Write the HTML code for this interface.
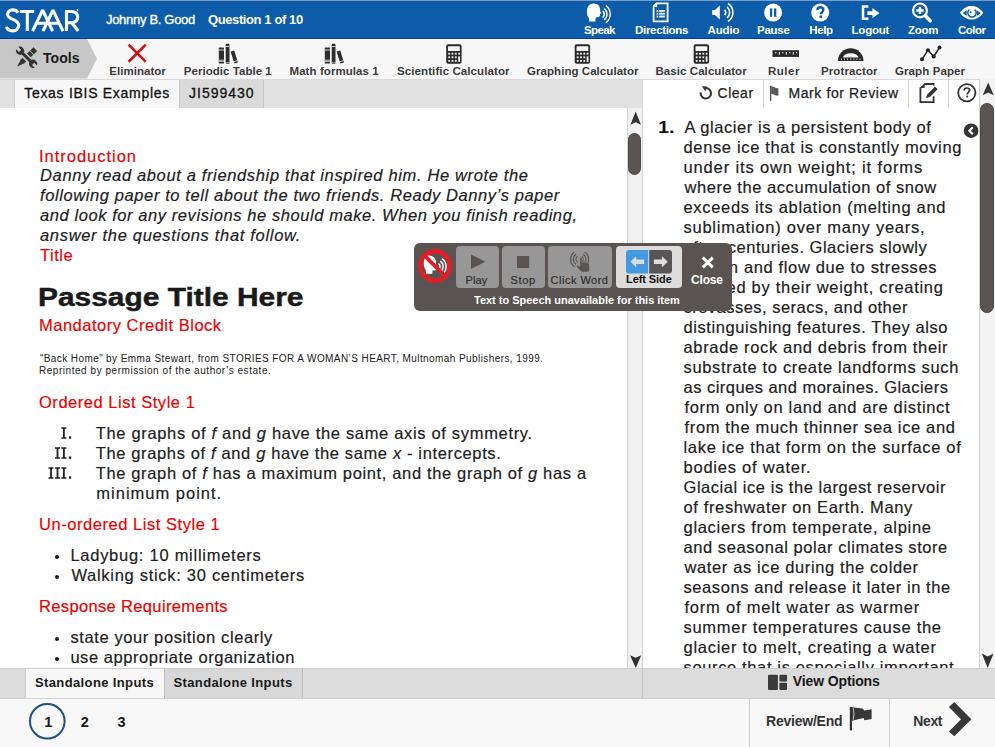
<!DOCTYPE html>
<html><head><meta charset="utf-8">
<style>
*{box-sizing:border-box;margin:0;padding:0}
html,body{width:995px;height:747px;overflow:hidden;background:#fff;font-family:"Liberation Sans",sans-serif}
.a{position:absolute}
.t{position:absolute;white-space:nowrap}
.layer{position:absolute;left:0;top:0;width:995px;height:747px}
</style></head><body>
<!-- header -->
<div class="a" style="left:0;top:0;width:995px;height:39px;background:#0c5caa"></div>
<div class="a" style="left:0;top:0;width:995px;height:1px;background:#7d9dc4"></div>
<div class="a" style="left:0;top:38px;width:995px;height:1px;background:#033e9a"></div>
<svg class="a" style="left:0;top:0" width="90" height="39" viewBox="0 0 90 39">
  <g fill="none" stroke="#fff" stroke-width="3.1">
    <path d="M18.2 12.6 C16.8 10.6 14.8 9.9 12.7 9.9 C9.6 9.9 7.6 11.9 7.6 14.4 C7.6 20.2 18.7 18.6 18.7 25.3 C18.7 28.7 16.1 30.9 12.7 30.9 C9.7 30.9 7.3 29.1 6.3 26.9"/>
    <path d="M19.8 11.5 H34.2 M27.3 11.5 V31"/>
    <path d="M32.6 31.2 L42.6 10.2 L52.6 31.2 M36.6 23.2 H48.4" stroke-linejoin="bevel"/>
    <path d="M43 31.2 L53 10.2 L63 31.2 M47 23.2 H58.9" stroke-linejoin="bevel"/>
    <path d="M66.5 31 V11.5 H71.2 C75.6 11.5 77.7 13.7 77.7 17.1 C77.7 20.7 75.3 22.7 71.2 22.7 H67.2 M71.6 22.5 L78.3 31"/>
  </g>
  <circle cx="77.6" cy="9.9" r="0.9" fill="#fff"/>
</svg>
<!-- header icons -->
<svg class="a" style="left:575px;top:0" width="420" height="26" viewBox="575 0 420 26">
  <g fill="#fff">
    <!-- speak head -->
    <path d="M593.5 3.6 C597.8 3.6 600.2 6.5 600.2 9.8 L600.1 11.2 L601.2 13.3 L600 13.9 L599.9 15.6 C599.8 16.8 598.8 17.2 597.4 17.2 L595.6 17.6 L595.4 21.6 L589.2 21.6 L589.2 18.4 C587.6 16.6 586.9 14.5 586.9 11.4 C586.9 6.6 589.6 3.6 593.5 3.6 Z"/>
  </g>
  <g fill="none" stroke="#fff" stroke-linecap="butt">
    <path d="M602.63 10.83 A4.40 4.40 0 0 1 602.63 17.57" stroke-width="1.70"/>
    <path d="M604.23 8.53 A7.20 7.20 0 0 1 604.23 19.87" stroke-width="1.40"/>
    <path d="M605.77 5.68 A10.40 10.40 0 0 1 605.77 22.72" stroke-width="1.40"/>
  </g>
  <!-- directions doc -->
  <path d="M656.5 3.3 H667.6 V21.3 H653.6 V6.3 Z" fill="none" stroke="#fff" stroke-width="1.8" stroke-linejoin="miter"/>
  <path d="M656.5 3.3 V6.3 H653.6" fill="none" stroke="#fff" stroke-width="1.4"/>
  <g fill="#fff">
    <rect x="656.6" y="10" width="1.7" height="1.8"/><rect x="659.2" y="10" width="5.6" height="1.8"/>
    <rect x="656.6" y="12.8" width="1.7" height="1.8"/><rect x="659.2" y="12.8" width="5.6" height="1.8"/>
    <rect x="656.6" y="15.6" width="1.7" height="1.8"/><rect x="659.2" y="15.6" width="5.6" height="1.8"/>
  </g>
  <!-- audio -->
  <path d="M712.2 10 H715 L719.8 5.6 V19.4 L715 15 H712.2 Z" fill="#fff"/>
  <g fill="none" stroke="#fff">
    <path d="M724.58 9.97 A3.40 3.40 0 0 1 724.58 15.03" stroke-width="1.70"/>
    <path d="M726.99 6.91 A7.30 7.30 0 0 1 726.99 18.09" stroke-width="1.50"/>
    <path d="M727.92 3.51 A10.60 10.60 0 0 1 727.92 21.49" stroke-width="1.50"/>
  </g>
  <!-- pause -->
  <circle cx="773.1" cy="12.6" r="9" fill="#fff"/>
  <rect x="769.9" y="8.4" width="2.3" height="8.4" fill="#0c5caa"/><rect x="774" y="8.4" width="2.3" height="8.4" fill="#0c5caa"/>
  <!-- help -->
  <circle cx="820.2" cy="12.6" r="9" fill="#fff"/>
  <path d="M817.4 10.1 C817.4 8.2 818.7 7.2 820.4 7.2 C822.2 7.2 823.3 8.3 823.3 9.9 C823.3 12 820.8 12.2 820.8 14.3" fill="none" stroke="#0c5caa" stroke-width="2.4"/>
  <rect x="819.5" y="15.5" width="2.6" height="2.4" fill="#0c5caa"/>
  <!-- logout -->
  <path d="M868.4 6.4 H863 V18.8 H868.4" fill="none" stroke="#fff" stroke-width="2.5"/>
  <path d="M867.4 11.2 H872.4 V7.9 L879.4 13.1 L872.4 18.3 V15 H867.4 Z" fill="#fff"/>
  <!-- zoom -->
  <circle cx="920" cy="10.4" r="6.9" fill="none" stroke="#fff" stroke-width="2.2"/>
  <path d="M925.3 15.7 L930.2 20.8" stroke="#fff" stroke-width="3.4" stroke-linecap="round"/>
  <path d="M916.3 10.4 H923.7 M920 6.7 V14.1" stroke="#fff" stroke-width="2.5"/>
  <!-- color eye -->
  <path d="M960 12.8 C963.5 7.8 967.6 6 971.6 6 C975.6 6 979.7 7.8 983.2 12.8 C979.7 17.8 975.6 19.6 971.6 19.6 C967.6 19.6 963.5 17.8 960 12.8 Z" fill="#fff"/>
  <path d="M962.6 13.1 L966.6 10.2 V16 Z" fill="#0c5caa"/>
  <path d="M980.8 13.1 L976.8 10.2 V16 Z" fill="#0c5caa"/>
  <path d="M974.7 9.6 A4.2 4.2 0 1 1 969.3 9.6" fill="none" stroke="#0c5caa" stroke-width="1.5"/>
  <circle cx="970.7" cy="12.3" r="0.95" fill="#0c5caa"/>
</svg>

<!-- toolbar -->
<div class="a" style="left:0;top:39px;width:995px;height:40px;background:#f7f7f7"></div>
<svg class="a" style="left:0;top:39px" width="100" height="40"><path d="M0 0 H87 L97 19.8 L87 39.6 H0 Z" fill="#c7c7c7"/></svg>
<svg class="a" style="left:0;top:0" width="995" height="80" viewBox="0 0 995 80">
  <!-- tools icon -->
  <g transform="translate(17.2 66.6) rotate(-44)" fill="#333">
    <path d="M0 0 L7.5 -2.6 H10 V2.6 H7.5 Z"/>
    <rect x="15.2" y="-2.6" width="4.6" height="5.2"/>
    <rect x="20.6" y="-2.6" width="4.6" height="5.2"/>
  </g>
  <g transform="translate(26.6 57.3) rotate(45)">
    <path d="M-7.5 0 H7.5" stroke="#c7c7c7" stroke-width="6"/>
    <path d="M-7.5 0 H7.5" stroke="#333" stroke-width="3"/>
    <circle cx="-9.2" cy="0" r="4" fill="#333"/>
    <circle cx="9.2" cy="0" r="4" fill="#333"/>
    <rect x="-14.2" y="-1.6" width="5" height="3.2" fill="#c7c7c7"/>
    <rect x="9.2" y="-1.6" width="5" height="3.2" fill="#c7c7c7"/>
  </g>
  <!-- eliminator X -->
  <path d="M129.5 45.5 L144.8 60.8 M144.8 45.5 L129.5 60.8" stroke="#cf111a" stroke-width="2.6" stroke-linecap="square"/>
  <!-- books x2 -->
  <g fill="#2e2e2e">
    <rect x="218.8" y="47.6" width="5.2" height="16" rx="0.6"/>
    <rect x="225.7" y="43.8" width="3.8" height="19.9" rx="1"/>
    <path d="M230.6 51.4 L234.2 50.4 L238 62.4 L234.4 63.4 Z"/>
  </g>
  <g fill="#f7f7f7">
    <rect x="218.8" y="49.6" width="5.2" height="0.8"/><rect x="218.8" y="59.8" width="5.2" height="0.8"/><rect x="218.8" y="61.4" width="5.2" height="0.6"/>
    <rect x="225.7" y="46.2" width="3.8" height="0.8"/><rect x="225.7" y="62.3" width="3.8" height="0.5"/>
    <path d="M233.6 61.2 L237.4 60.2 L237.6 60.9 L233.8 61.9 Z"/>
  </g>
  <g fill="#2e2e2e" transform="translate(106 0)">
    <rect x="218.8" y="47.6" width="5.2" height="16" rx="0.6"/>
    <rect x="225.7" y="43.8" width="3.8" height="19.9" rx="1"/>
    <path d="M230.6 51.4 L234.2 50.4 L238 62.4 L234.4 63.4 Z"/>
  </g>
  <g fill="#f7f7f7" transform="translate(106 0)">
    <rect x="218.8" y="49.6" width="5.2" height="0.8"/><rect x="218.8" y="59.8" width="5.2" height="0.8"/><rect x="218.8" y="61.4" width="5.2" height="0.6"/>
    <rect x="225.7" y="46.2" width="3.8" height="0.8"/><rect x="225.7" y="62.3" width="3.8" height="0.5"/>
    <path d="M233.6 61.2 L237.4 60.2 L237.6 60.9 L233.8 61.9 Z"/>
  </g>
  <!-- calculators -->
  <g>
    <rect x="446.2" y="44.3" width="15.4" height="19.5" rx="2" fill="#2a2a2a"/>
    <rect x="448" y="46.3" width="11.8" height="4.6" rx="0.5" fill="#f7f7f7"/>
    <g fill="#f7f7f7">
      <rect x="448.3" y="52.8" width="1.8" height="1.8"/><rect x="451.6" y="52.8" width="1.8" height="1.8"/><rect x="454.9" y="52.8" width="1.8" height="1.8"/><rect x="458.2" y="52.8" width="1.8" height="1.8"/>
      <rect x="448.3" y="56.4" width="1.8" height="1.8"/><rect x="451.6" y="56.4" width="1.8" height="1.8"/><rect x="454.9" y="56.4" width="1.8" height="1.8"/>
      <rect x="448.3" y="60" width="1.8" height="1.8"/><rect x="451.6" y="60" width="1.8" height="1.8"/><rect x="454.9" y="60" width="1.8" height="1.8"/>
      <rect x="458.2" y="56.4" width="1.8" height="5.4"/>
    </g>
  </g>
  <g transform="translate(128.5 0)">
    <rect x="446.2" y="44.3" width="15.4" height="19.5" rx="2" fill="#2a2a2a"/>
    <rect x="448" y="46.3" width="11.8" height="4.6" rx="0.5" fill="#f7f7f7"/>
    <g fill="#f7f7f7">
      <rect x="448.3" y="52.8" width="1.8" height="1.8"/><rect x="451.6" y="52.8" width="1.8" height="1.8"/><rect x="454.9" y="52.8" width="1.8" height="1.8"/><rect x="458.2" y="52.8" width="1.8" height="1.8"/>
      <rect x="448.3" y="56.4" width="1.8" height="1.8"/><rect x="451.6" y="56.4" width="1.8" height="1.8"/><rect x="454.9" y="56.4" width="1.8" height="1.8"/>
      <rect x="448.3" y="60" width="1.8" height="1.8"/><rect x="451.6" y="60" width="1.8" height="1.8"/><rect x="454.9" y="60" width="1.8" height="1.8"/>
      <rect x="458.2" y="56.4" width="1.8" height="5.4"/>
    </g>
  </g>
  <g transform="translate(247.5 0)">
    <rect x="446.2" y="44.3" width="15.4" height="19.5" rx="2" fill="#2a2a2a"/>
    <rect x="448" y="46.3" width="11.8" height="4.6" rx="0.5" fill="#f7f7f7"/>
    <g fill="#f7f7f7">
      <rect x="448.3" y="52.8" width="1.8" height="1.8"/><rect x="451.6" y="52.8" width="1.8" height="1.8"/><rect x="454.9" y="52.8" width="1.8" height="1.8"/><rect x="458.2" y="52.8" width="1.8" height="1.8"/>
      <rect x="448.3" y="56.4" width="1.8" height="1.8"/><rect x="451.6" y="56.4" width="1.8" height="1.8"/><rect x="454.9" y="56.4" width="1.8" height="1.8"/>
      <rect x="448.3" y="60" width="1.8" height="1.8"/><rect x="451.6" y="60" width="1.8" height="1.8"/><rect x="454.9" y="60" width="1.8" height="1.8"/>
      <rect x="458.2" y="56.4" width="1.8" height="5.4"/>
    </g>
  </g>
  <!-- ruler -->
  <rect x="772.5" y="50.2" width="26.5" height="6.7" fill="#2a2a2a"/>
  <g fill="#f7f7f7">
    <rect x="775.3" y="52" width="1" height="1.3"/><rect x="778.8" y="52" width="1" height="2.6"/><rect x="782.3" y="52" width="1" height="1.3"/><rect x="785.8" y="52" width="1" height="2.6"/><rect x="789.3" y="52" width="1" height="1.3"/><rect x="792.8" y="52" width="1" height="2.6"/><rect x="796.2" y="52" width="1" height="1.3"/>
  </g>
  <!-- protractor -->
  <path d="M837.9 61 A12.8 12.8 0 0 1 863.5 61 Z" fill="#2a2a2a"/>
  <path d="M843 57.6 A7.7 4.4 0 0 1 858.4 57.6 Z" fill="#f7f7f7"/>
  <g fill="#f7f7f7">
    <rect x="841" y="58.6" width="0.9" height="1.2"/><rect x="844" y="58.6" width="0.9" height="1.2"/><rect x="847" y="58.6" width="0.9" height="1.2"/><rect x="850.3" y="58.6" width="0.9" height="1.2"/><rect x="853.5" y="58.6" width="0.9" height="1.2"/><rect x="856.5" y="58.6" width="0.9" height="1.2"/><rect x="859.5" y="58.6" width="0.9" height="1.2"/>
  </g>
  <!-- graph paper -->
  <path d="M922 59.3 L927.9 50.2 L933.7 56.5 L939.5 47.6" fill="none" stroke="#222" stroke-width="1.5"/>
  <g fill="#222"><circle cx="922" cy="59.3" r="2"/><circle cx="927.9" cy="50.2" r="2"/><circle cx="933.7" cy="56.5" r="2"/><circle cx="939.5" cy="47.6" r="2"/></g>
</svg>

<!-- tab row -->
<div class="a" style="left:0;top:79px;width:643px;height:29px;background:#e1e1e1"></div>
<div class="a" style="left:14px;top:79px;width:165px;height:29px;background:#f7f7f7;border-left:1px solid #cfcfcf"></div>
<div class="a" style="left:179px;top:79px;width:85px;height:29px;background:#dadada;border-left:1px solid #c8c8c8;border-right:1px solid #c8c8c8"></div>
<!-- right top bar -->
<div class="a" style="left:642px;top:79px;width:353px;height:29px;background:#fff;border-left:1px solid #d6d6d6"></div>
<div class="a" style="left:0;top:79px;width:995px;height:1px;background:#d9d9d9"></div>
<div class="a" style="left:763px;top:79px;width:1px;height:29px;background:#d4d4d4"></div>
<div class="a" style="left:908px;top:79px;width:1px;height:29px;background:#d4d4d4"></div>
<div class="a" style="left:948px;top:79px;width:1px;height:29px;background:#d4d4d4"></div>
<svg class="a" style="left:640px;top:79px" width="355" height="29" viewBox="640 79 355 29">
  <!-- clear icon -->
  <path d="M705.8 88.1 A5.2 5.2 0 1 1 700.7 92.4" fill="none" stroke="#333" stroke-width="2"/>
  <path d="M701.8 86.2 L707.2 86.6 L705.4 91.4 Z" fill="#333"/>
  <!-- flag -->
  <path d="M770.6 85.8 V100.9" stroke="#555" stroke-width="1.4"/>
  <path d="M771.2 86.2 C773.4 85.8 775.2 88.6 778.4 88.2 V95.8 C775.4 96 773.6 93.6 771.2 94 Z" fill="#5a5a5a"/>
  <!-- edit icon -->
  <path d="M924.2 84 H933.6 V85.6 M933.6 96.2 V102.2 H920.4 V87.4" fill="none" stroke="#333" stroke-width="1.8"/>
  <path d="M924.6 83.2 V88 H919.6 Z" fill="#333"/>
  <path d="M926 98 L927.2 94.4 L935 86.6 L937.6 89.2 L929.8 97 Z" fill="#333"/>
  <!-- help -->
  <circle cx="966.8" cy="92.8" r="8.6" fill="none" stroke="#333" stroke-width="1.8"/>
  <path d="M964.2 90.6 C964.2 88.8 965.4 88 966.9 88 C968.5 88 969.6 89 969.6 90.3 C969.6 92.2 967.2 92.4 967.2 94.4" fill="none" stroke="#333" stroke-width="1.7"/>
  <rect x="966.3" y="95.6" width="1.8" height="1.8" fill="#333"/>
</svg>

<!-- left content -->
<div class="a" style="left:0;top:108px;width:628px;height:560px;background:#fff"></div>
<div class="layer" style="clip-path:inset(108px 368px 79px 0)">
<div class="t" id="l1" style="left:39.00px;top:146.61px;font-size:16.50px;line-height:18.959px;color:#ec0000;font-family:'Liberation Sans',sans-serif;letter-spacing:0.982px;-webkit-text-stroke:0.18px currentColor;">Introduction</div>
<div class="t" id="l2" style="left:40.00px;top:166.31px;font-size:16.50px;line-height:18.959px;color:#202020;font-family:'Liberation Sans',sans-serif;font-style:italic;letter-spacing:0.643px;-webkit-text-stroke:0.18px currentColor;">Danny read about a friendship that inspired him. He wrote the</div>
<div class="t" id="l3" style="left:40.00px;top:186.31px;font-size:16.50px;line-height:18.959px;color:#202020;font-family:'Liberation Sans',sans-serif;font-style:italic;letter-spacing:0.600px;-webkit-text-stroke:0.18px currentColor;">following paper to tell about the two friends. Ready Danny&#8217;s paper</div>
<div class="t" id="l4" style="left:40.00px;top:206.31px;font-size:16.50px;line-height:18.959px;color:#202020;font-family:'Liberation Sans',sans-serif;font-style:italic;letter-spacing:0.576px;-webkit-text-stroke:0.18px currentColor;">and look for any revisions he should make. When you finish reading,</div>
<div class="t" id="l5" style="left:40.00px;top:226.31px;font-size:16.50px;line-height:18.959px;color:#202020;font-family:'Liberation Sans',sans-serif;font-style:italic;letter-spacing:0.681px;-webkit-text-stroke:0.18px currentColor;">answer the questions that follow.</div>
<div class="t" id="l6" style="left:40.00px;top:246.41px;font-size:16.50px;line-height:18.959px;color:#ec0000;font-family:'Liberation Sans',sans-serif;letter-spacing:0.500px;-webkit-text-stroke:0.18px currentColor;">Title</div>
<div class="t" id="l7" style="left:37.50px;top:282.61px;font-size:25.00px;line-height:28.725px;color:#1a1a1a;font-family:'Liberation Sans',sans-serif;font-weight:bold;transform:scaleX(1.1964);transform-origin:0 0;-webkit-text-stroke:0.45px #1a1a1a;">Passage Title Here</div>
<div class="t" id="l8" style="left:39.00px;top:315.50px;font-size:16.50px;line-height:18.959px;color:#ec0000;font-family:'Liberation Sans',sans-serif;letter-spacing:0.505px;-webkit-text-stroke:0.18px currentColor;">Mandatory Credit Block</div>
<div class="t" id="l9" style="left:40.00px;top:352.60px;font-size:10.00px;line-height:11.490px;color:#202020;font-family:'Liberation Sans',sans-serif;letter-spacing:0.416px;">&#8220;Back Home&#8221; by Emma Stewart, from STORIES FOR A WOMAN&#8217;S HEART, Multnomah Publishers, 1999.</div>
<div class="t" id="l10" style="left:39.00px;top:365.41px;font-size:10.00px;line-height:11.490px;color:#202020;font-family:'Liberation Sans',sans-serif;letter-spacing:0.539px;">Reprinted by permission of the author&#8217;s estate.</div>
<div class="t" id="l11" style="left:39.00px;top:392.50px;font-size:16.50px;line-height:18.959px;color:#ec0000;font-family:'Liberation Sans',sans-serif;letter-spacing:0.526px;-webkit-text-stroke:0.18px currentColor;">Ordered List Style 1</div>
<div class="t" id="o1" style="left:95.70px;top:423.72px;font-size:16.50px;line-height:18.959px;color:#202020;font-family:'Liberation Sans',sans-serif;letter-spacing:0.673px;-webkit-text-stroke:0.18px currentColor;">The graphs of <i>f</i> and <i>g</i> have the same axis of symmetry.</div>
<div class="t" id="o2" style="left:95.70px;top:443.81px;font-size:16.50px;line-height:18.959px;color:#202020;font-family:'Liberation Sans',sans-serif;letter-spacing:0.636px;-webkit-text-stroke:0.18px currentColor;">The graphs of <i>f</i> and <i>g</i> have the same <i>x</i> - intercepts.</div>
<div class="t" id="o3" style="left:95.70px;top:463.72px;font-size:16.50px;line-height:18.959px;color:#202020;font-family:'Liberation Sans',sans-serif;letter-spacing:0.647px;-webkit-text-stroke:0.18px currentColor;">The graph of <i>f</i> has a maximum point, and the graph of <i>g</i> has a</div>
<div class="t" id="o4" style="left:96.30px;top:484.31px;font-size:16.50px;line-height:18.959px;color:#202020;font-family:'Liberation Sans',sans-serif;letter-spacing:1.000px;-webkit-text-stroke:0.18px currentColor;">minimum point.</div>
<div class="t" id="l12" style="left:39.00px;top:514.70px;font-size:16.50px;line-height:18.959px;color:#ec0000;font-family:'Liberation Sans',sans-serif;letter-spacing:0.545px;-webkit-text-stroke:0.18px currentColor;">Un-ordered List Style 1</div>
<div class="t" id="u1" style="left:70.40px;top:546.00px;font-size:16.50px;line-height:18.959px;color:#202020;font-family:'Liberation Sans',sans-serif;letter-spacing:0.736px;-webkit-text-stroke:0.18px currentColor;">Ladybug: 10 millimeters</div>
<div class="t" id="u2" style="left:71.40px;top:565.70px;font-size:16.50px;line-height:18.959px;color:#202020;font-family:'Liberation Sans',sans-serif;letter-spacing:0.707px;-webkit-text-stroke:0.18px currentColor;">Walking stick: 30 centimeters</div>
<div class="t" id="l13" style="left:39.00px;top:597.00px;font-size:16.50px;line-height:18.959px;color:#ec0000;font-family:'Liberation Sans',sans-serif;letter-spacing:0.350px;-webkit-text-stroke:0.18px currentColor;">Response Requirements</div>
<div class="t" id="u3" style="left:70.40px;top:628.31px;font-size:16.50px;line-height:18.959px;color:#202020;font-family:'Liberation Sans',sans-serif;letter-spacing:0.608px;-webkit-text-stroke:0.18px currentColor;">state your position clearly</div>
<div class="t" id="u4" style="left:70.40px;top:648.00px;font-size:16.50px;line-height:18.959px;color:#202020;font-family:'Liberation Sans',sans-serif;letter-spacing:0.548px;-webkit-text-stroke:0.18px currentColor;">use appropriate organization</div>
<svg class="a" style="left:0;top:0" width="100" height="500" viewBox="0 0 100 500"><g fill="#202020"><path d="M61.40 427.20 H66.40 V428.75 H64.80 V437.15 H66.40 V438.70 H61.40 V437.15 H63.00 V428.75 H61.40 Z"/><rect x="68.9" y="436.40" width="2.3" height="2.3"/><path d="M55.00 447.30 H60.00 V448.85 H58.40 V457.25 H60.00 V458.80 H55.00 V457.25 H56.60 V448.85 H55.00 Z"/><path d="M61.40 447.30 H66.40 V448.85 H64.80 V457.25 H66.40 V458.80 H61.40 V457.25 H63.00 V448.85 H61.40 Z"/><rect x="68.9" y="456.50" width="2.3" height="2.3"/><path d="M48.50 467.20 H53.50 V468.75 H51.90 V477.15 H53.50 V478.70 H48.50 V477.15 H50.10 V468.75 H48.50 Z"/><path d="M55.00 467.20 H60.00 V468.75 H58.40 V477.15 H60.00 V478.70 H55.00 V477.15 H56.60 V468.75 H55.00 Z"/><path d="M61.40 467.20 H66.40 V468.75 H64.80 V477.15 H66.40 V478.70 H61.40 V477.15 H63.00 V468.75 H61.40 Z"/><rect x="68.9" y="476.40" width="2.3" height="2.3"/></g></svg>
<div class="a" style="left:55px;top:554.8px;width:4.1px;height:4.1px;border-radius:50%;background:#1a1a1a"></div>
<div class="a" style="left:55px;top:574.8px;width:4.1px;height:4.1px;border-radius:50%;background:#1a1a1a"></div>
<div class="a" style="left:55px;top:637.1px;width:4.1px;height:4.1px;border-radius:50%;background:#1a1a1a"></div>
<div class="a" style="left:55px;top:656.9px;width:4.1px;height:4.1px;border-radius:50%;background:#1a1a1a"></div>
</div>
<!-- left scrollbar -->
<div class="a" style="left:627px;top:108px;width:16px;height:560px;background:#f1f1f1;border-left:1px solid #d3d3d3;border-right:1px solid #d3d3d3"></div>
<div class="a" style="left:628px;top:132.5px;width:13px;height:42.2px;border-radius:6.5px;background:#5a5552;border:1px solid #4d4945"></div>
<svg class="a" style="left:627px;top:108px" width="16" height="560" viewBox="627 108 16 560">
  <path d="M635.7 111.4 L641 124.8 L635.7 122.3 L630.4 124.8 Z" fill="#333"/>
  <path d="M635.7 668 L641.3 655.2 L635.7 657.7 L630.1 655.2 Z" fill="#333"/>
</svg>

<!-- right content -->
<div class="a" style="left:643px;top:108px;width:337px;height:560px;background:#fff"></div>
<div class="layer" style="clip-path:inset(108px 15px 79px 643px)">
<div class="t" id="n1" style="left:657.60px;top:118.72px;font-size:16.00px;line-height:18.384px;color:#111;font-family:'Liberation Sans',sans-serif;font-weight:bold;transform:scaleX(1.2350);transform-origin:0 0;">1.</div>
<div class="t" id="rl0" style="left:684.50px;top:117.72px;font-size:16.50px;line-height:18.959px;color:#202020;font-family:'Liberation Sans',sans-serif;letter-spacing:0.562px;-webkit-text-stroke:0.18px currentColor;">A glacier is a persistent body of</div>
<div class="t" id="rl1" style="left:683.50px;top:137.72px;font-size:16.50px;line-height:18.959px;color:#202020;font-family:'Liberation Sans',sans-serif;letter-spacing:0.647px;-webkit-text-stroke:0.18px currentColor;">dense ice that is constantly moving</div>
<div class="t" id="rl2" style="left:683.50px;top:157.72px;font-size:16.50px;line-height:18.959px;color:#202020;font-family:'Liberation Sans',sans-serif;letter-spacing:0.862px;-webkit-text-stroke:0.18px currentColor;">under its own weight; it forms</div>
<div class="t" id="rl3" style="left:684.50px;top:177.72px;font-size:16.50px;line-height:18.959px;color:#202020;font-family:'Liberation Sans',sans-serif;letter-spacing:0.552px;-webkit-text-stroke:0.18px currentColor;">where the accumulation of snow</div>
<div class="t" id="rl4" style="left:683.50px;top:197.72px;font-size:16.50px;line-height:18.959px;color:#202020;font-family:'Liberation Sans',sans-serif;letter-spacing:0.675px;-webkit-text-stroke:0.18px currentColor;">exceeds its ablation (melting and</div>
<div class="t" id="rl5" style="left:683.50px;top:217.72px;font-size:16.50px;line-height:18.959px;color:#202020;font-family:'Liberation Sans',sans-serif;letter-spacing:0.750px;-webkit-text-stroke:0.18px currentColor;">sublimation) over many years,</div>
<div class="t" id="rl6" style="left:683.50px;top:237.72px;font-size:16.50px;line-height:18.959px;color:#202020;font-family:'Liberation Sans',sans-serif;letter-spacing:0.510px;-webkit-text-stroke:0.18px currentColor;">often centuries. Glaciers slowly</div>
<div class="t" id="rl7" style="left:683.50px;top:257.72px;font-size:16.50px;line-height:18.959px;color:#202020;font-family:'Liberation Sans',sans-serif;letter-spacing:0.640px;-webkit-text-stroke:0.18px currentColor;">deform and flow due to stresses</div>
<div class="t" id="rl8" style="left:683.50px;top:277.72px;font-size:16.50px;line-height:18.959px;color:#202020;font-family:'Liberation Sans',sans-serif;letter-spacing:0.712px;-webkit-text-stroke:0.18px currentColor;">induced by their weight, creating</div>
<div class="t" id="rl9" style="left:683.50px;top:297.72px;font-size:16.50px;line-height:18.959px;color:#202020;font-family:'Liberation Sans',sans-serif;letter-spacing:0.481px;-webkit-text-stroke:0.18px currentColor;">crevasses, seracs, and other</div>
<div class="t" id="rl10" style="left:683.50px;top:317.72px;font-size:16.50px;line-height:18.959px;color:#202020;font-family:'Liberation Sans',sans-serif;letter-spacing:0.588px;-webkit-text-stroke:0.18px currentColor;">distinguishing features. They also</div>
<div class="t" id="rl11" style="left:683.50px;top:337.72px;font-size:16.50px;line-height:18.959px;color:#202020;font-family:'Liberation Sans',sans-serif;letter-spacing:0.656px;-webkit-text-stroke:0.18px currentColor;">abrade rock and debris from their</div>
<div class="t" id="rl12" style="left:683.50px;top:357.72px;font-size:16.50px;line-height:18.959px;color:#202020;font-family:'Liberation Sans',sans-serif;letter-spacing:0.661px;-webkit-text-stroke:0.18px currentColor;">substrate to create landforms such</div>
<div class="t" id="rl13" style="left:683.50px;top:377.72px;font-size:16.50px;line-height:18.959px;color:#202020;font-family:'Liberation Sans',sans-serif;letter-spacing:0.469px;-webkit-text-stroke:0.18px currentColor;">as cirques and moraines. Glaciers</div>
<div class="t" id="rl14" style="left:684.50px;top:397.72px;font-size:16.50px;line-height:18.959px;color:#202020;font-family:'Liberation Sans',sans-serif;letter-spacing:0.667px;-webkit-text-stroke:0.18px currentColor;">form only on land and are distinct</div>
<div class="t" id="rl15" style="left:684.50px;top:417.72px;font-size:16.50px;line-height:18.959px;color:#202020;font-family:'Liberation Sans',sans-serif;letter-spacing:0.656px;-webkit-text-stroke:0.18px currentColor;">from the much thinner sea ice and</div>
<div class="t" id="rl16" style="left:683.50px;top:437.72px;font-size:16.50px;line-height:18.959px;color:#202020;font-family:'Liberation Sans',sans-serif;letter-spacing:0.691px;-webkit-text-stroke:0.18px currentColor;">lake ice that form on the surface of</div>
<div class="t" id="rl17" style="left:683.50px;top:457.72px;font-size:16.50px;line-height:18.959px;color:#202020;font-family:'Liberation Sans',sans-serif;letter-spacing:0.773px;-webkit-text-stroke:0.18px currentColor;">bodies of water.</div>
<div class="t" id="rl18" style="left:683.50px;top:477.72px;font-size:16.50px;line-height:18.959px;color:#202020;font-family:'Liberation Sans',sans-serif;letter-spacing:0.543px;-webkit-text-stroke:0.18px currentColor;">Glacial ice is the largest reservoir</div>
<div class="t" id="rl19" style="left:683.50px;top:497.70px;font-size:16.50px;line-height:18.959px;color:#202020;font-family:'Liberation Sans',sans-serif;letter-spacing:0.630px;-webkit-text-stroke:0.18px currentColor;">of freshwater on Earth. Many</div>
<div class="t" id="rl20" style="left:683.50px;top:517.70px;font-size:16.50px;line-height:18.959px;color:#202020;font-family:'Liberation Sans',sans-serif;letter-spacing:0.700px;-webkit-text-stroke:0.18px currentColor;">glaciers from temperate, alpine</div>
<div class="t" id="rl21" style="left:683.50px;top:537.70px;font-size:16.50px;line-height:18.959px;color:#202020;font-family:'Liberation Sans',sans-serif;letter-spacing:0.562px;-webkit-text-stroke:0.18px currentColor;">and seasonal polar climates store</div>
<div class="t" id="rl22" style="left:684.50px;top:557.70px;font-size:16.50px;line-height:18.959px;color:#202020;font-family:'Liberation Sans',sans-serif;letter-spacing:0.621px;-webkit-text-stroke:0.18px currentColor;">water as ice during the colder</div>
<div class="t" id="rl23" style="left:683.50px;top:577.70px;font-size:16.50px;line-height:18.959px;color:#202020;font-family:'Liberation Sans',sans-serif;letter-spacing:0.588px;-webkit-text-stroke:0.18px currentColor;">seasons and release it later in the</div>
<div class="t" id="rl24" style="left:684.50px;top:597.70px;font-size:16.50px;line-height:18.959px;color:#202020;font-family:'Liberation Sans',sans-serif;letter-spacing:0.778px;-webkit-text-stroke:0.18px currentColor;">form of melt water as warmer</div>
<div class="t" id="rl25" style="left:683.50px;top:617.70px;font-size:16.50px;line-height:18.959px;color:#202020;font-family:'Liberation Sans',sans-serif;letter-spacing:0.714px;-webkit-text-stroke:0.18px currentColor;">summer temperatures cause the</div>
<div class="t" id="rl26" style="left:683.50px;top:637.70px;font-size:16.50px;line-height:18.959px;color:#202020;font-family:'Liberation Sans',sans-serif;letter-spacing:0.725px;-webkit-text-stroke:0.18px currentColor;">glacier to melt, creating a water</div>
<div class="t" id="rl27" style="left:683.50px;top:657.70px;font-size:16.50px;line-height:18.959px;color:#202020;font-family:'Liberation Sans',sans-serif;letter-spacing:0.635px;-webkit-text-stroke:0.18px currentColor;">source that is especially important</div>
</div>
<!-- chevron circle -->
<svg class="a" style="left:962px;top:122px" width="18" height="18" viewBox="962 122 18 18">
  <circle cx="971.1" cy="130.7" r="7.3" fill="#333"/>
  <path d="M972.8 127.2 L969.3 130.7 L972.8 134.2" fill="none" stroke="#fff" stroke-width="2"/>
</svg>
<!-- right scrollbar -->
<div class="a" style="left:979px;top:79px;width:16px;height:589px;background:#f3f3f3;border-left:1px solid #d3d3d3"></div>
<div class="a" style="left:980px;top:103.4px;width:13.8px;height:209.7px;border-radius:6.9px;background:#5a5552;border:1px solid #4d4945"></div>
<svg class="a" style="left:979px;top:79px" width="16" height="589" viewBox="979 79 16 589">
  <path d="M988.2 82.4 L993.8 95.2 L988.2 92.6 L982.7 95.2 Z" fill="#333"/>
  <path d="M987.7 668 L993.6 653.6 L987.7 656.6 L981.8 653.6 Z" fill="#333"/>
</svg>

<!-- popup -->
<div class="a" style="left:414px;top:243px;width:318px;height:68px;border-radius:6px;background:#595451"></div>
<div class="a" style="left:456px;top:246px;width:43px;height:42px;border-radius:4px;background:#989797"></div>
<div class="a" style="left:502px;top:246px;width:43px;height:42px;border-radius:4px;background:#989797"></div>
<div class="a" style="left:548px;top:246px;width:64px;height:42px;border-radius:4px;background:#989797"></div>
<div class="a" style="left:616px;top:246px;width:66px;height:42px;border-radius:4px;background:#dcdcdc"></div>
<svg class="a" style="left:414px;top:243px" width="318" height="68" viewBox="414 243 318 68">
  <!-- no speak -->
  <circle cx="435" cy="266" r="14.6" fill="none" stroke="#e31d25" stroke-width="4.6"/>
  <g transform="translate(423.8 255.4) scale(1.17 1.35) translate(-426.7 -255.6)">
  <path d="M431 255.6 C434.6 255.6 437.2 257.8 437.2 260.8 L437 262 L438.3 263.8 L437.1 264.3 L437.2 265.7 C437.2 266.6 436.3 266.9 435.3 266.8 L434 266.8 L434 269.2 L428.5 269.2 L428.5 266.6 C427.2 265.3 426.7 263.6 426.7 261.4 C426.7 257.7 428.6 255.6 431 255.6 Z" fill="#fff"/>
  </g>
  <g fill="none" stroke="#fff" stroke-width="1.4">
    <path d="M438.57 263.55 A3.6 3.6 0 0 1 438.57 269.45"/>
    <path d="M440.29 261.09 A6.6 6.6 0 0 1 440.29 271.91"/>
    <path d="M442.01 258.64 A9.6 9.6 0 0 1 442.01 274.36"/>
  </g>
  <path d="M425.2 256.4 L444.6 275.6" stroke="#e31d25" stroke-width="3.8"/>
  <!-- play -->
  <path d="M471 254.6 L485.5 261.8 L471 269 Z" fill="#595451"/>
  <!-- stop -->
  <rect x="517" y="256" width="12.2" height="12" fill="#595451"/>
  <!-- click word -->
  <g fill="none" stroke="#5a5654" stroke-width="1.25">
    <path d="M577.54 256.35 A3.6 3.6 0 0 0 577.54 262.25"/>
    <path d="M581.66 256.35 A3.6 3.6 0 0 1 581.66 262.25"/>
    <path d="M575.99 254.14 A6.3 6.3 0 0 0 575.99 264.46"/>
    <path d="M583.21 254.14 A6.3 6.3 0 0 1 583.21 264.46"/>
    <path d="M574.44 251.93 A9.0 9.0 0 0 0 574.44 266.67"/>
    <path d="M584.76 251.93 A9.0 9.0 0 0 1 584.76 266.67"/>
  </g>
  <path d="M579.9 258.6 L582 258.2 L582 262.4 C582.9 262 583.8 262 584.4 262.5 C585.2 262 586.2 262.1 586.8 262.7 C587.6 262.4 588.7 262.7 589 263.6 L589.6 268.8 C589.8 270.4 588.7 271.9 587.1 272 L582.9 272 C581.7 272 580.8 271.4 580 270.5 L576.7 266.7 C576.1 265.9 576.9 264.9 577.9 265.3 L579.8 266.2 Z" fill="#5a5654" stroke="#989797" stroke-width="0.5"/>
  <circle cx="580.95" cy="258.6" r="1.05" fill="#5a5654"/>
  <!-- left/right -->
  <path d="M629 250 H648.2 V273.6 H629 A3 3 0 0 1 626 270.6 V253 A3 3 0 0 1 629 250 Z" fill="#4499e0"/>
  <path d="M649.2 250 H669 A3 3 0 0 1 672 253 V270.6 A3 3 0 0 1 669 273.6 H649.2 Z" fill="#575555"/>
  <path d="M630.3 261.8 L636.2 256.3 V259.6 H644.2 V264 H636.2 V267.3 Z" fill="#dcdcdc"/>
  <path d="M667.8 261.8 L661.9 256.3 V259.6 H653.9 V264 H661.9 V267.3 Z" fill="#dcdcdc"/>
  <!-- close X -->
  <path d="M702.8 257.6 L712.8 267.4 M712.8 257.6 L702.8 267.4" stroke="#fff" stroke-width="3"/>
</svg>
<div class="layer">
<div class="t" id="pp_play" style="left:465.60px;top:273.50px;font-size:11.00px;line-height:12.639px;color:#2e2e2e;font-family:'Liberation Sans',sans-serif;letter-spacing:0.100px;-webkit-text-stroke:0.2px #2e2e2e;">Play</div>
<div class="t" id="pp_stop" style="left:510.40px;top:273.71px;font-size:11.00px;line-height:12.639px;color:#2e2e2e;font-family:'Liberation Sans',sans-serif;letter-spacing:0.733px;-webkit-text-stroke:0.2px #2e2e2e;">Stop</div>
<div class="t" id="pp_click" style="left:550.60px;top:273.71px;font-size:11.00px;line-height:12.639px;color:#2e2e2e;font-family:'Liberation Sans',sans-serif;letter-spacing:0.489px;-webkit-text-stroke:0.2px #2e2e2e;">Click Word</div>
<div class="t" id="pp_left" style="left:626.10px;top:273.00px;font-size:11.00px;line-height:12.639px;color:#111;font-family:'Liberation Sans',sans-serif;font-weight:bold;letter-spacing:-0.100px;">Left Side</div>
<div class="t" id="pp_close" style="left:691.10px;top:273.80px;font-size:12.00px;line-height:13.788px;color:#fff;font-family:'Liberation Sans',sans-serif;font-weight:bold;letter-spacing:-0.200px;">Close</div>
<div class="t" id="pp_msg" style="left:474.00px;top:294.31px;font-size:11.00px;line-height:12.639px;color:#fff;font-family:'Liberation Sans',sans-serif;font-weight:bold;letter-spacing:-0.013px;">Text to Speech unavailable for this item</div>
</div>

<!-- bottom tab bar -->
<div class="a" style="left:0;top:668px;width:995px;height:30px;background:#dcdcdc;border-top:1px solid #cdcdcd"></div>
<div class="a" style="left:25px;top:668px;width:140px;height:30px;background:#f7f7f7;border:1px solid #cdcdcd;border-bottom:none"></div>
<div class="a" style="left:164px;top:668px;width:139px;height:30px;background:#d8d8d8;border:1px solid #bebebe;border-bottom:none;border-top:1px solid #cdcdcd"></div>
<div class="a" style="left:642px;top:668px;width:1px;height:30px;background:#c2c2c2"></div>
<svg class="a" style="left:765px;top:672px" width="25" height="20" viewBox="765 672 25 20">
  <rect x="768" y="674.8" width="9.9" height="15.1" rx="1" fill="#3a3a3a"/>
  <rect x="779.4" y="674.8" width="7.6" height="6.8" rx="1" fill="#3a3a3a"/>
  <rect x="779.4" y="682.8" width="7.6" height="7.1" rx="1" fill="#3a3a3a"/>
</svg>
<!-- footer -->
<div class="a" style="left:0;top:698px;width:995px;height:49px;background:#f8f8f8;border-top:1px solid #d2d2d2"></div>
<div class="a" style="left:749px;top:698px;width:1px;height:49px;background:#cfcfcf"></div>
<div class="a" style="left:889px;top:698px;width:1px;height:49px;background:#cfcfcf"></div>
<svg class="a" style="left:0;top:698px" width="995" height="49" viewBox="0 698 995 49">
  <circle cx="47.3" cy="721.3" r="17.3" fill="none" stroke="#1e4f86" stroke-width="2"/>
  <path d="M850.9 707 V730.4" stroke="#333" stroke-width="2.2"/>
  <path d="M852 707.2 L862.6 708.6 L864.2 710.6 L871.6 709.2 V719 L864.4 720.2 L863.6 718 L852 720.8 Z" fill="#383838"/>
  <path d="M853.3 708.2 Q854.6 713.8 853.3 719.8" fill="none" stroke="#d0d0d0" stroke-width="0.9"/>
  <path d="M948.9 706.9 L954.3 702.1 L971.4 719.2 L954.3 736.3 L948.9 731.5 L961 719.2 Z" fill="#383838"/>
</svg>
<div class="layer">
<div class="t" id="h_name" style="left:106.00px;top:13.00px;font-size:13.00px;line-height:14.937px;color:#fff;font-family:'Liberation Sans',sans-serif;letter-spacing:-0.308px;-webkit-text-stroke:0.35px #fff;">Johnny B. Good</div>
<div class="t" id="h_q" style="left:208.00px;top:13.00px;font-size:13.00px;line-height:14.937px;color:#fff;font-family:'Liberation Sans',sans-serif;font-weight:bold;letter-spacing:-0.400px;">Question 1 of 10</div>
<div class="t" id="hs" style="left:584.00px;top:23.71px;font-size:11.50px;line-height:13.213px;color:#fff;font-family:'Liberation Sans',sans-serif;font-weight:bold;letter-spacing:-0.650px;">Speak</div>
<div class="t" id="hd" style="left:635.10px;top:23.71px;font-size:11.50px;line-height:13.213px;color:#fff;font-family:'Liberation Sans',sans-serif;font-weight:bold;letter-spacing:-0.333px;">Directions</div>
<div class="t" id="ha" style="left:707.60px;top:23.71px;font-size:11.50px;line-height:13.213px;color:#fff;font-family:'Liberation Sans',sans-serif;font-weight:bold;letter-spacing:-0.150px;">Audio</div>
<div class="t" id="hp" style="left:757.00px;top:23.71px;font-size:11.50px;line-height:13.213px;color:#fff;font-family:'Liberation Sans',sans-serif;font-weight:bold;letter-spacing:-0.250px;">Pause</div>
<div class="t" id="hh" style="left:809.20px;top:23.71px;font-size:11.50px;line-height:13.213px;color:#fff;font-family:'Liberation Sans',sans-serif;font-weight:bold;letter-spacing:-0.333px;">Help</div>
<div class="t" id="hl" style="left:851.50px;top:23.71px;font-size:11.50px;line-height:13.213px;color:#fff;font-family:'Liberation Sans',sans-serif;font-weight:bold;letter-spacing:-0.200px;">Logout</div>
<div class="t" id="hz" style="left:908.10px;top:23.71px;font-size:11.50px;line-height:13.213px;color:#fff;font-family:'Liberation Sans',sans-serif;font-weight:bold;letter-spacing:-0.333px;">Zoom</div>
<div class="t" id="hc" style="left:958.00px;top:23.71px;font-size:11.50px;line-height:13.213px;color:#fff;font-family:'Liberation Sans',sans-serif;font-weight:bold;letter-spacing:-0.500px;">Color</div>
<div class="t" id="tools" style="left:43.00px;top:49.50px;font-size:14.00px;line-height:16.086px;color:#1a1a1a;font-family:'Liberation Sans',sans-serif;font-weight:bold;letter-spacing:0.050px;">Tools</div>
<div class="t" id="e1" style="left:109.20px;top:65.01px;font-size:11.50px;line-height:13.213px;color:#3b3b3b;font-family:'Liberation Sans',sans-serif;font-weight:bold;letter-spacing:0.044px;">Eliminator</div>
<div class="t" id="e2" style="left:183.80px;top:65.01px;font-size:11.50px;line-height:13.213px;color:#3b3b3b;font-family:'Liberation Sans',sans-serif;font-weight:bold;letter-spacing:0.040px;">Periodic Table 1</div>
<div class="t" id="e3" style="left:289.50px;top:65.01px;font-size:11.50px;line-height:13.213px;color:#3b3b3b;font-family:'Liberation Sans',sans-serif;font-weight:bold;letter-spacing:0.071px;">Math formulas 1</div>
<div class="t" id="e4" style="left:397.00px;top:65.01px;font-size:11.50px;line-height:13.213px;color:#3b3b3b;font-family:'Liberation Sans',sans-serif;font-weight:bold;letter-spacing:0.100px;">Scientific Calculator</div>
<div class="t" id="e5" style="left:527.00px;top:65.01px;font-size:11.50px;line-height:13.213px;color:#3b3b3b;font-family:'Liberation Sans',sans-serif;font-weight:bold;letter-spacing:0.056px;">Graphing Calculator</div>
<div class="t" id="e6" style="left:655.50px;top:65.01px;font-size:11.50px;line-height:13.213px;color:#3b3b3b;font-family:'Liberation Sans',sans-serif;font-weight:bold;letter-spacing:0.067px;">Basic Calculator</div>
<div class="t" id="e7" style="left:768.00px;top:65.01px;font-size:11.50px;line-height:13.213px;color:#3b3b3b;font-family:'Liberation Sans',sans-serif;font-weight:bold;letter-spacing:0.500px;">Ruler</div>
<div class="t" id="e8" style="left:821.00px;top:65.01px;font-size:11.50px;line-height:13.213px;color:#3b3b3b;font-family:'Liberation Sans',sans-serif;font-weight:bold;letter-spacing:0.111px;">Protractor</div>
<div class="t" id="e9" style="left:895.00px;top:65.01px;font-size:11.50px;line-height:13.213px;color:#3b3b3b;font-family:'Liberation Sans',sans-serif;font-weight:bold;letter-spacing:0.100px;">Graph Paper</div>
<div class="t" id="tab1" style="left:24.20px;top:84.50px;font-size:14.00px;line-height:16.086px;color:#111;font-family:'Liberation Sans',sans-serif;letter-spacing:0.711px;-webkit-text-stroke:0.3px #111;">Texas IBIS Examples</div>
<div class="t" id="tab2" style="left:189.00px;top:84.50px;font-size:14.00px;line-height:16.086px;color:#111;font-family:'Liberation Sans',sans-serif;letter-spacing:1.000px;-webkit-text-stroke:0.3px #111;">JI599430</div>
<div class="t" id="clear" style="left:717.60px;top:84.91px;font-size:14.00px;line-height:16.086px;color:#222;font-family:'Liberation Sans',sans-serif;letter-spacing:0.500px;-webkit-text-stroke:0.25px #222;">Clear</div>
<div class="t" id="mfr" style="left:788.40px;top:84.91px;font-size:14.00px;line-height:16.086px;color:#222;font-family:'Liberation Sans',sans-serif;letter-spacing:0.607px;-webkit-text-stroke:0.25px #222;">Mark for Review</div>
<div class="t" id="bt1" style="left:35.00px;top:675.50px;font-size:13.00px;line-height:14.937px;color:#1a1a1a;font-family:'Liberation Sans',sans-serif;font-weight:bold;letter-spacing:0.375px;">Standalone Inputs</div>
<div class="t" id="bt2" style="left:173.50px;top:675.50px;font-size:13.00px;line-height:14.937px;color:#1a1a1a;font-family:'Liberation Sans',sans-serif;font-weight:bold;letter-spacing:0.375px;">Standalone Inputs</div>
<div class="t" id="vo" style="left:792.80px;top:673.11px;font-size:14.00px;line-height:16.086px;color:#1a1a1a;font-family:'Liberation Sans',sans-serif;font-weight:bold;letter-spacing:-0.127px;">View Options</div>
<div class="t" id="f1" style="left:44.30px;top:714.11px;font-size:14.50px;line-height:16.660px;color:#1a1a1a;font-family:'Liberation Sans',sans-serif;font-weight:bold;">1</div>
<div class="t" id="f2" style="left:80.70px;top:714.11px;font-size:14.50px;line-height:16.660px;color:#1a1a1a;font-family:'Liberation Sans',sans-serif;font-weight:bold;">2</div>
<div class="t" id="f3" style="left:117.60px;top:714.11px;font-size:14.50px;line-height:16.660px;color:#1a1a1a;font-family:'Liberation Sans',sans-serif;font-weight:bold;">3</div>
<div class="t" id="rev" style="left:766.00px;top:713.00px;font-size:14.00px;line-height:16.086px;color:#333;font-family:'Liberation Sans',sans-serif;font-weight:bold;letter-spacing:-0.222px;">Review/End</div>
<div class="t" id="nxt" style="left:913.20px;top:713.00px;font-size:14.00px;line-height:16.086px;color:#333;font-family:'Liberation Sans',sans-serif;font-weight:bold;letter-spacing:-0.333px;">Next</div>
</div>
</body></html>
